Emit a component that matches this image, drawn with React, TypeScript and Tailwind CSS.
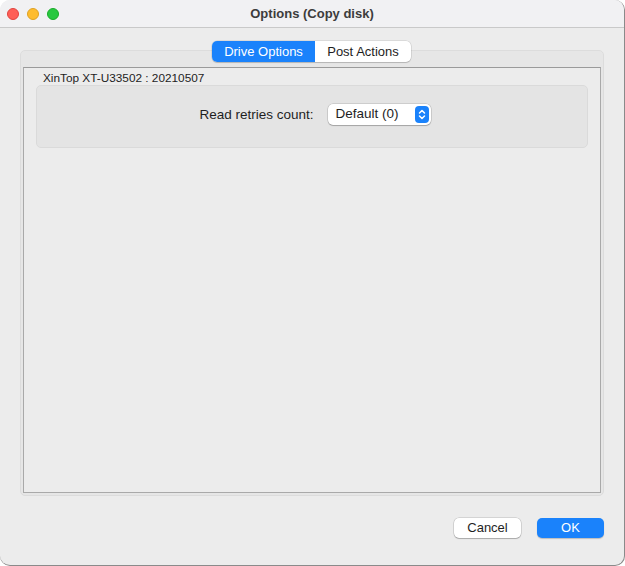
import React from 'react';

const font = { fontFamily: '"Liberation Sans", Arial, sans-serif' };

const App: React.FC = () => {
  return (
    <div className="w-[625px] h-[566px] bg-white" style={font}>
      <div className="w-[625px] h-[566px] flex flex-col bg-[#ececec] rounded-[10px] overflow-hidden border-b border-r border-[#8a8a8a]">
        {/* Title bar */}
        <div className="h-[28px] shrink-0 flex items-center relative bg-[#f1f1f3] border-b border-[#c9c9c9]">
          <div className="flex items-center gap-[8px] pl-[7px]">
            <span className="w-[12px] h-[12px] rounded-full bg-[#fe5f57] border border-[#e0443e]" />
            <span className="w-[12px] h-[12px] rounded-full bg-[#febc2e] border border-[#dea123]" />
            <span className="w-[12px] h-[12px] rounded-full bg-[#28c840] border border-[#1aab29]" />
          </div>
          <div className="absolute inset-0 flex items-center justify-center text-[13px] font-bold text-[#3c3c3c] pointer-events-none">
            Options (Copy disk)
          </div>
        </div>

        {/* Tab view */}
        <div className="flex-1 flex flex-col px-[20px] pt-[22px]">
          <div className="relative h-[446px] flex flex-col rounded-[5px] border border-[#dcdcdc] bg-[#e6e6e6] pt-[16px] px-[2px] pb-[2px]">
            {/* segmented tabs */}
            <div className="absolute top-[-10px] left-[191px] flex h-[21px] rounded-[5px] bg-white shadow-[0_0_0_0.5px_rgba(0,0,0,0.15),0_1px_1px_rgba(0,0,0,0.15)] text-[13px]">
              <div className="w-[103px] flex items-center justify-center rounded-l-[5px] bg-[#1a82fb] text-white">
                Drive Options
              </div>
              <div className="w-[96px] flex items-center justify-center text-[#1e1e1e]">
                Post Actions
              </div>
            </div>

            <div className="flex-1 bg-[#ececec] border border-[#a9a9a9] border-t-[#9a9a9a] flex flex-col px-[12px]">
              <div className="text-[11.8px] text-[#1e1e1e] pl-[7px] pt-[4px] leading-[13px]">
                XinTop XT-U33502 : 20210507
              </div>
              <div className="h-[63px] rounded-[5px] border border-[#dadada] bg-[#e4e4e4] flex justify-center pt-[18px]">
                <div className="flex items-start gap-[14px] pl-[6px]">
                  <span className="text-[13.5px] text-[#1e1e1e] leading-[21px]">Read retries count:</span>
                  <div className="w-[103px] h-[21px] rounded-[5px] bg-white shadow-[0_0_0_0.5px_rgba(0,0,0,0.2),0_1px_1px_rgba(0,0,0,0.2)] flex items-center justify-between pl-[8px] pr-[2px]">
                    <span className="text-[13.5px] text-[#1e1e1e]">Default (0)</span>
                    <span className="w-[14px] h-[17px] rounded-[4px] bg-[#1a82fb] flex items-center justify-center">
                      <svg width="8" height="11" viewBox="0 0 8 11" fill="none" stroke="white" strokeWidth="1.5" strokeLinecap="round" strokeLinejoin="round">
                        <path d="M1.5 4 L4 1.5 L6.5 4" />
                        <path d="M1.5 7 L4 9.5 L6.5 7" />
                      </svg>
                    </span>
                  </div>
                </div>
              </div>
            </div>
          </div>

          {/* Buttons */}
          <div className="flex justify-end gap-[16px] mt-[22px]">
            <button className="w-[67px] h-[20px] rounded-[5px] bg-white text-[13px] text-[#1e1e1e] shadow-[0_0_0_0.5px_rgba(0,0,0,0.2),0_1px_1px_rgba(0,0,0,0.2)]">
              Cancel
            </button>
            <button className="w-[67px] h-[20px] rounded-[5px] bg-[#1a82fb] text-[13px] text-white shadow-[0_1px_1px_rgba(0,0,0,0.2)]">
              OK
            </button>
          </div>
        </div>
      </div>
    </div>
  );
};

export default App;
